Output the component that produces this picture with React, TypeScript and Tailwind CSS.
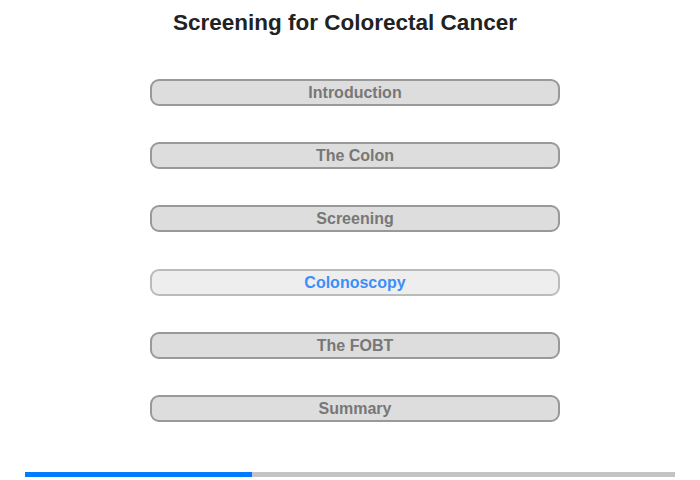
import { useState } from 'react';

const SECTIONS = ['Introduction', 'The Colon', 'Screening', 'Colonoscopy', 'The FOBT', 'Summary'];

export default function App() {
  const [active, setActive] = useState(3);
  const progress = 227;

  return (
    <div className="w-[700px] h-[480px] bg-white font-['Liberation_Sans',Arial,sans-serif] flex flex-col">
      <h1 className="mt-[10px] ml-[-10px] text-center text-[22.5px] leading-[26px] font-bold text-[#222]">
        Screening for Colorectal Cancer
      </h1>

      <div className="mt-[43px] ml-[150px] flex flex-col gap-[36.2px]">
        {SECTIONS.map((s, i) => (
          <button
            key={s}
            onClick={() => setActive(i)}
            className={`w-[410px] h-[27px] rounded-[9px] border-2 text-[16px] font-bold leading-none pt-px ${
              i === active
                ? 'bg-[#eeeeee] border-[#bbbbbb] text-[#3d8ef8]'
                : 'bg-[#dddddd] border-[#999999] text-[#777777]'
            }`}
          >
            {s}
          </button>
        ))}
      </div>

      <div className="mt-[50px] mx-[25px] h-[5px] bg-[#c4c4c4] flex">
        <div className="h-full bg-[#007bff]" style={{ width: progress }} />
      </div>
    </div>
  );
}
